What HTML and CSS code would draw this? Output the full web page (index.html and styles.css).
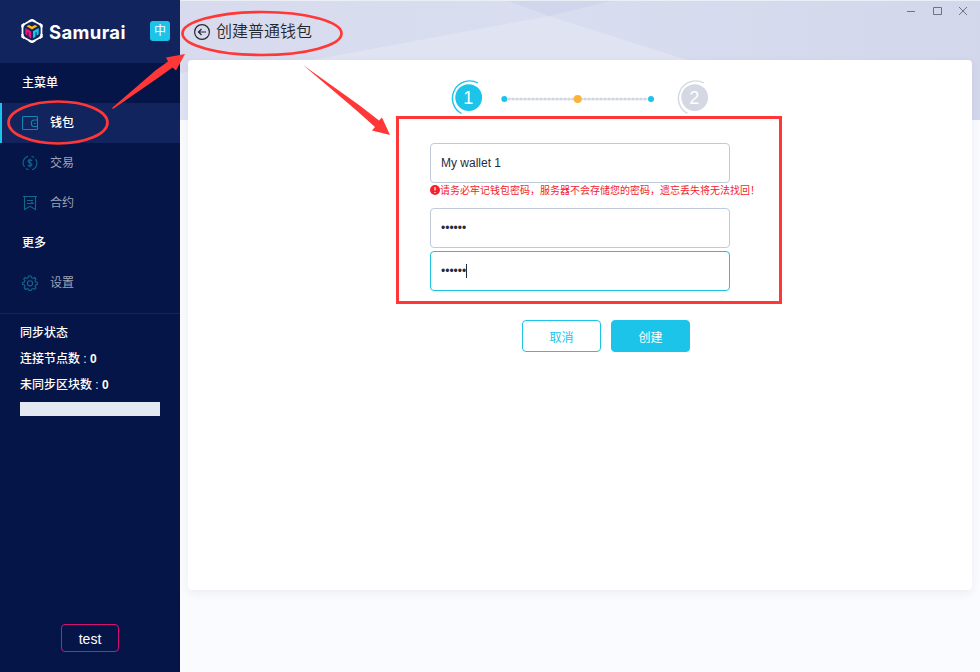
FILE: index.html
```html
<!DOCTYPE html>
<html lang="zh-CN">
<head>
<meta charset="utf-8">
<title>Samurai</title>
<link rel="stylesheet" href="styles.css">
</head>
<body>
<div class="app">
  <aside class="sidebar">
    <header class="brand">
      <svg class="logo" width="22" height="24" viewBox="0 0 22 24" fill="none">
        <path d="M8 2.600 1.500 6.300v11.400L11 23l9.500-5.300V6.300L11 1z" stroke="#fff" stroke-width="1.700"/>
        <path d="M8 2.600 11 1l3 1.600M20.500 8.500V6.300L18.500 5M20.500 15v2.700l-2 1.300M14 21.400 11 23l-3-1.600M3.500 19l-2-1.300V15M1.500 8.500V6.300L3.500 5" stroke="#fff" stroke-width="2.300"/>
        <path d="m5.500 7.300 2.500-1.400L11 7.500l3-1.600 2.500 1.400L11 10.500z" fill="#fdb813"/>
        <path d="m4.300 9 5.700 3.200v7l-2.500-1.400v-4.300L6.500 13v3.500l-2.200-1.200z" fill="#f2127b"/>
        <path d="m17.700 9-5.700 3.200v7l2.500-1.400v-4.300l1-.5v3.500l2.200-1.200z" fill="#1cc4ea"/>
      </svg>
      <span class="name">Samurai</span>
      <span class="lang">中</span>
    </header>
    <nav>
      <div class="heading">主菜单</div>
      <a class="item active"><svg width="16" height="16" viewBox="0 0 16 16"><path d="M15.500 5.500v-3a1 1 0 0 0-1-1h-13a1 1 0 0 0-1 1v11a1 1 0 0 0 1 1h13a1 1 0 0 0 1-1v-2M15.500 5H12a2.500 2.500 0 0 0-2.500 2.500v1.500a2.500 2.500 0 0 0 2.500 2.500h3.500zM12 8.500h1.500"/></svg><span>钱包</span></a>
      <a class="item"><svg width="16" height="16" viewBox="0 0 16 16"><path d="M6 1.300a6.800 6.800 0 0 0-3.500 10.600M4 13.500a6.800 6.800 0 0 0 2.500 1.200M10 14.700A6.800 6.800 0 0 0 13.500 4.100M12 2.500A6.800 6.800 0 0 0 9.500 1.300M10 6C9.700 4.500 6 4.500 6 6.300S10 7.700 10 9.600 6.300 11.500 6 9.800M8 3.500v9"/></svg><span>交易</span></a>
      <a class="item"><svg width="16" height="16" viewBox="0 0 16 16"><path d="M1 1.500h14M2.500 1.500v13L8 11.300l5.500 3.200v-13M5 5.500h6M5 8.500h6L9.500 7"/></svg><span>合约</span></a>
      <div class="heading">更多</div>
      <a class="item"><svg width="16" height="16" viewBox="0 0 16 16"><path d="m6.500 1-.4 1.700-1.500.7L3 2.500 1.800 4l1 1.500L2.300 7 .7 7.500v2l1.700.5.600 1.400-.9 1.600L3.600 14.500l1.500-.9 1.500.6.500 1.300h2l.5-1.400 1.500-.6 1.500.9 1.400-1.400-.9-1.600.6-1.400 1.600-.5v-2L13.700 7l-.6-1.500.9-1.500-1.400-1.500-1.500.9-1.500-.7L9 1z"/><circle cx="8" cy="8.300" r="2.600"/></svg><span>设置</span></a>
    </nav>
    <section class="sync">
      <div>同步状态</div>
      <div>连接节点数 : <b>0</b></div>
      <div>未同步区块数 : <b>0</b></div>
      <div class="progress"></div>
    </section>
    <button class="network">test</button>
  </aside>
  <main class="main">
    <svg class="backdrop" width="800" height="120" viewBox="0 0 800 120">
      <defs><linearGradient id="sky"><stop stop-color="#d8dbee"/><stop offset=".45" stop-color="#d9ddf0"/><stop offset="1" stop-color="#d2d7eb"/></linearGradient></defs>
      <path fill="url(#sky)" d="M0 0h800v120H0z"/>
      <path fill="#e0e3f1" d="M0 73 135 59.500 369 16l138 44 190 60H0z"/>
      <path fill="#d1d6ed" d="m326 0 43 16 66-16z"/>
      <path fill="#eceef6" d="M0 0h800v1H0z"/>
    </svg>
    <header class="top">
      <div class="title">
        <svg width="16" height="16" viewBox="0 0 16 16"><circle cx="8" cy="8" r="7.400"/><path d="M12 8H4.500M7.500 5l-3 3 3 3"/></svg>
        <h1>创建普通钱包</h1>
      </div>
      <svg class="controls" width="64" height="12" viewBox="0 0 64 12"><path d="M1 6.500h8M27.500 2.500h8v7h-8zM53 2l8 8M61 2l-8 8"/></svg>
    </header>
    <section class="card">
      <div class="steps">
        <svg class="step" width="36" height="36" viewBox="0 0 36 36"><circle cx="19.700" cy="18.600" r="13.400"/><path d="M29 4A17.300 17.300 0 1 0 12.500 34.500"/><text x="19.300" y="25">1</text></svg>
        <svg class="track" width="154" height="10" viewBox="0 0 154 10"><path d="M4 5h146" stroke="#e4e6ef" stroke-width="1.500"/><path d="M9 5h140" stroke="#d3d7e4" stroke-width="3.200" stroke-linecap="round" stroke-dasharray=".1 3.900"/><circle cx="4.300" cy="5" r="3" fill="#1dc3eb"/><circle cx="77.700" cy="5" r="4" fill="#fbb33c"/><circle cx="151" cy="5" r="3" fill="#1dc3eb"/></svg>
        <svg class="step pending" width="36" height="36" viewBox="0 0 36 36"><circle cx="19.700" cy="18.600" r="13.400"/><path d="M29 4A17.300 17.300 0 1 0 12.500 34.500"/><text x="19.300" y="25">2</text></svg>
      </div>
      <div class="form">
        <div class="field">My wallet 1</div>
        <div class="warning"><svg width="10" height="10" viewBox="0 0 10 10"><circle cx="5" cy="5" r="5" fill="#f5222d"/><path d="M5 2v3.500M5 7v1" stroke="#fff" stroke-width="1.200"/></svg><span>请务必牢记钱包密码，服务器不会存储您的密码，遗忘丢失将无法找回！</span></div>
        <div class="field secret">••••••</div>
        <div class="field secret focused">••••••<i class="caret"></i></div>
      </div>
      <div class="actions"><button class="btn">取消</button><button class="btn primary">创建</button></div>
    </section>
  </main>
  <svg class="marks" width="980" height="672" viewBox="0 0 980 672">
    <g fill="none" stroke="#ff3737" stroke-width="2.700"><ellipse cx="58" cy="122.500" rx="49.500" ry="21"/><ellipse cx="262" cy="33.500" rx="79.500" ry="21.500"/><path stroke-width="3" d="M397.500 117.500h383v185h-383z"/></g>
    <g fill="#ff3737"><path d="m112 108 44-38 12-8.500-2-4 19-3.500-9 16.500-3.500-3-12.500 9L113 109z"/><path d="m303 65 56 40 20 15.500 3-3 8 17.500-18-4.500 3-3.500-19-17z"/></g>
  </svg>
</div>
</body>
</html>
```
FILE: styles.css
```css
* { box-sizing: border-box; }
body { margin: 0; font: 12px "Liberation Sans", "Noto Sans CJK SC", sans-serif; }
button { font: inherit; padding: 0; }
.app { position: relative; display: flex; width: 980px; height: 672px; overflow: hidden; }
.sidebar { display: flex; flex-direction: column; width: 180px; background: #051548; color: #fff; }
.brand { display: flex; align-items: center; height: 63px; padding: 0 10px 2px 21px; background: #11245d; }
.logo { flex: none; }
.name { width: 82px; margin: 2px 0 0 6px; font: 700 18.500px/24px Inter, sans-serif; letter-spacing: .35px; }
.lang { width: 20px; height: 20px; margin-left: auto; border-radius: 3px; background: #1cc4ea; line-height: 21px; text-align: center; }
.heading { height: 40px; padding-left: 22px; line-height: 40px; font-weight: 500; }
.item { display: flex; align-items: center; height: 40px; padding-left: 22px; color: #9ba1b6; }
.item span { padding-bottom: 3px; }
.item svg { margin-right: 12px; fill: none; stroke: #11678f; stroke-width: 1.100; }
.item.active { padding-left: 20px; border-left: 2px solid #1cc4ea; background: #11245d; color: #fff; font-weight: 500; }
.item.active svg { stroke: #1587ad; }
.sync { margin-top: 10px; padding: 6px 20px; border-top: 1px solid #14255a; line-height: 26px; font-weight: 500; }
.progress { height: 14px; margin-top: 4px; background: #e4e8f0; }
.network { width: 58px; height: 28px; margin: auto auto 20px 61px; padding-top: 1px; border: 1px solid #d51270; border-radius: 4px; background: transparent; color: #fff; font-size: 14px; }
.main { position: relative; flex: 1; background: #fafbfe; }
.backdrop { position: absolute; left: 0; top: 0; }
.top { position: relative; display: flex; justify-content: space-between; height: 60px; padding: 0 10px 0 14px; }
.title { display: flex; align-items: center; gap: 6px; height: 63px; color: #25272e; }
.title svg { fill: none; stroke: #25272e; stroke-width: 1.200; }
h1 { margin: 0; font-size: 16px; line-height: 24px; font-weight: 350; }
.controls { margin-top: 5px; fill: none; stroke: #70727f; stroke-width: 1; }
.card { position: relative; width: 784px; height: 530px; margin-left: 8px; border-radius: 4px; background: #fff; box-shadow: 0 3px 8px rgba(60, 75, 140, .08); }
.steps { display: flex; padding: 19px 0 0 261px; }
.step { fill: #1cc4ea; }
.step path { fill: none; stroke: #1cc4ea; stroke-width: 1.400; }
.step text { fill: #fff; font-size: 18px; text-anchor: middle; }
.step.pending { fill: #d3d8e2; }
.step.pending path { stroke: #d3d8e2; }
.track { margin: 15px 21px 0 15px; }
.form { width: 340px; margin: 28px 0 0 242px; }
.field { display: flex; align-items: center; width: 300px; height: 40px; padding: 0 10px 1px; border: 1px solid #bfcbd9; border-radius: 4px; color: #1f2d3d; }
.secret { margin-bottom: 3px; }
.focused { border-color: #1cc4dd; }
.caret { width: 1px; height: 14px; background: #1f2d3d; }
.warning { display: flex; height: 25px; padding-top: 2px; color: #f5222d; font-size: 10px; line-height: 11px; white-space: nowrap; }
.warning svg { flex: none; }
.actions { display: flex; gap: 10px; margin: 29px 0 0 334px; }
.btn { width: 79px; height: 32px; border: 1px solid #1cc4ea; border-radius: 4px; background: #fff; color: #1cc4ea; }
.primary { background: #1cc4ea; color: #fff; }
.marks { position: absolute; left: 0; top: 0; pointer-events: none; }
```
